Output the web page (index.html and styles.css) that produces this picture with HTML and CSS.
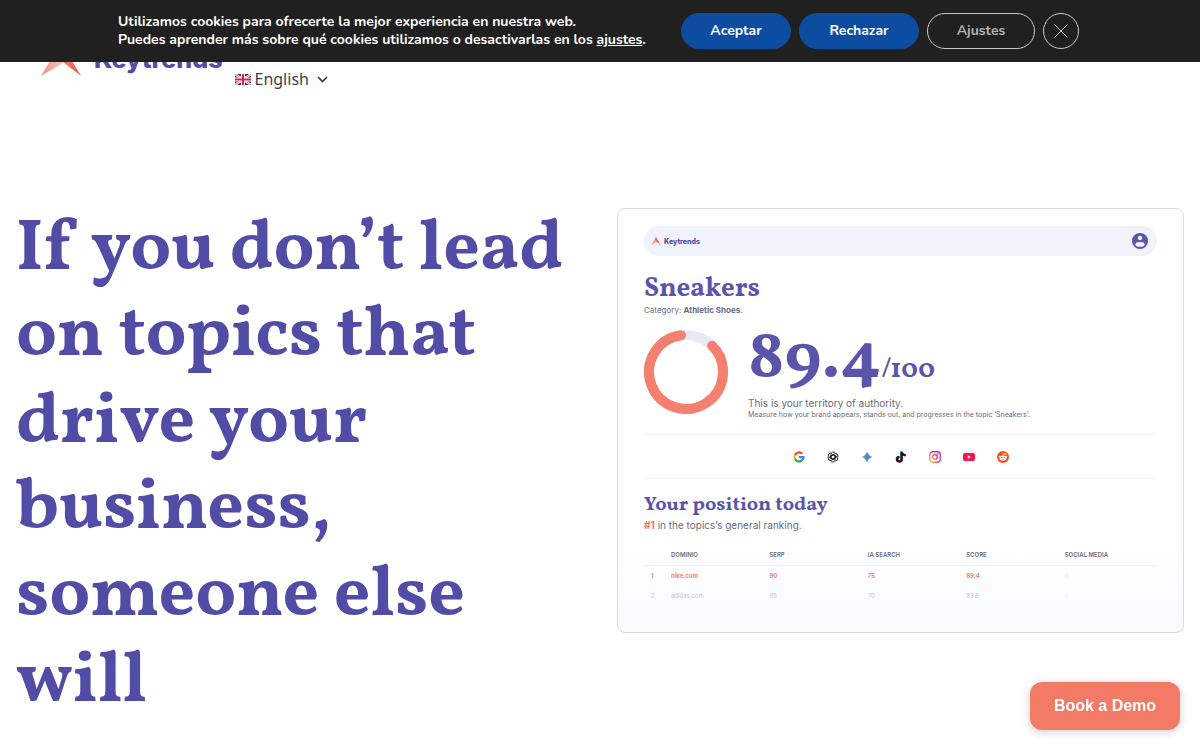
FILE: index.html
```html
<!DOCTYPE html>
<html lang="en">
<head>
  <meta charset="UTF-8" />
  <meta name="viewport" content="width=device-width, initial-scale=1" />
  <title>Keytrends</title>
  <link rel="stylesheet" href="styles.css">
</head>
<body>
  <!-- Cookie bar -->
  <aside class="cookie-bar" lang="es" aria-label="Cookies">
    <p class="cookie-text">
      Utilizamos cookies para ofrecerte la mejor experiencia en nuestra web.<br>
      Puedes aprender más sobre qué cookies utilizamos o desactivarlas en los <a href="#">ajustes</a>.
    </p>
    <div class="cookie-actions">
      <button class="btn-accept">Aceptar</button>
      <button class="btn-reject">Rechazar</button>
      <button class="btn-settings">Ajustes</button>
      <button class="btn-close" aria-label="Cerrar">
        <svg width="14" height="14" viewBox="0 0 14 14"><path d="M.5.5l13 13M13.500.5L.5 13.500" stroke="#c8c8c8" fill="none"/></svg>
      </button>
    </div>
  </aside>

  <!-- Header -->
  <header class="site-header">
    <a class="logo" href="#">
      <svg width="40" height="34" viewBox="0 0 40 34">
        <defs>
          <linearGradient id="legLeft" x1="0" y1="1" x2="1" y2="0.4">
            <stop offset="0" stop-color="#f08f82"/>
            <stop offset="1" stop-color="#f6cdc6"/>
          </linearGradient>
          <linearGradient id="legRight" x1="0" y1="0" x2="1" y2="1">
            <stop offset="0" stop-color="#f2937f"/>
            <stop offset="1" stop-color="#e4604e"/>
          </linearGradient>
        </defs>
        <path d="M20 0L0 34L22 21L24 7z" fill="url(#legLeft)"/>
        <path d="M20 0L40 34L22 20L15 9z" fill="url(#legRight)"/>
      </svg>
      <span>Keytrends</span>
    </a>
    <nav>
      <a class="lang" href="#">
        <svg width="16" height="11" viewBox="0 0 16 11">
          <path fill="#2b2c6b" d="M0 0h16v11H0z"/>
          <path stroke="#fff" stroke-width="2.400" d="M0 0l16 11M16 0L0 11"/>
          <path stroke="#d0324b" stroke-width=".7" d="M0 0l16 11M16 0L0 11"/>
          <path stroke="#fff" stroke-width="4" d="M8 0v11M0 5.500h16"/>
          <path stroke="#d8203f" stroke-width="2" d="M8 0v11M0 5.500h16"/>
        </svg>
        <span>English</span>
        <svg class="caret" width="11" height="7" viewBox="0 0 11 7"><path d="M1 1l4.500 4.500L10 1" fill="none" stroke="#334" stroke-width="1.600"/></svg>
      </a>
    </nav>
  </header>

  <!-- Hero -->
  <main class="hero">
    <h1>If you don’t lead<br>on topics that<br>drive your<br>business,<br>someone else<br>will</h1>

    <section class="card">
      <div class="card-bar">
        <div class="card-logo">
          <svg width="10" height="8" viewBox="0 0 40 34">
            <path d="M20 0L0 34L22 21L24 7z" fill="#f0a08c"/>
            <path d="M20 0L40 34L22 20L15 9z" fill="#e4705c"/>
          </svg>
          <span>Keytrends</span>
        </div>
        <svg width="16" height="16" viewBox="0 0 16 16">
          <circle cx="8" cy="8" r="8" fill="#5c55a8"/>
          <circle cx="8" cy="5" r="2.200" fill="#f1f3fc"/>
          <ellipse cx="8" cy="11.400" rx="4.600" ry="2.400" fill="#f1f3fc"/>
        </svg>
      </div>

      <h2>Sneakers</h2>
      <p class="category">Category: <strong>Athletic Shoes.</strong></p>

      <div class="score">
        <svg width="84" height="84" viewBox="0 0 84 84">
          <circle cx="42" cy="42" r="37" fill="none" stroke="#e9e8f4" stroke-width="10"/>
          <path d="M68.200 15.800A37 37 0 1 1 37 5.300" fill="none" stroke="#f58070" stroke-width="10" stroke-linecap="round"/>
        </svg>
        <div>
          <div class="score-value">89.4<small>/100</small></div>
          <p class="score-title">This is your territory of authority.</p>
          <p class="score-note">Measure how your brand appears, stands out, and progresses in the topic ‘Sneakers’.</p>
        </div>
      </div>

      <div class="sources">
        <!-- Google -->
        <svg viewBox="0 0 24 24">
          <path fill="none" stroke="#ea4335" stroke-width="4.500" d="M4 8A9 9 0 0 1 18.500 5.500"/>
          <path fill="none" stroke="#fbbc05" stroke-width="4.500" d="M4 16A9 9 0 0 1 4 8"/>
          <path fill="none" stroke="#34a853" stroke-width="4.500" d="M4 16A9 9 0 0 0 17.500 19"/>
          <path fill="none" stroke="#4285f4" stroke-width="4.500" d="M12 12h9A9 9 0 0 1 17.500 19"/>
        </svg>
        <!-- ChatGPT -->
        <svg viewBox="0 0 24 24">
          <defs><path id="petal" d="M8 14V6.500a4.800 4.800 0 0 1 8.800-2.500M8 9.500l4-2.300 4.200 2.400"/></defs>
          <g fill="none" stroke="#222" stroke-width="1.900">
            <use href="#petal"/>
            <use href="#petal" transform="rotate(60 12 12)"/>
            <use href="#petal" transform="rotate(120 12 12)"/>
            <use href="#petal" transform="rotate(180 12 12)"/>
            <use href="#petal" transform="rotate(240 12 12)"/>
            <use href="#petal" transform="rotate(300 12 12)"/>
          </g>
        </svg>
        <!-- Gemini -->
        <svg viewBox="0 0 24 24">
          <defs>
            <linearGradient id="gem" x1="0" y1="0" x2="1" y2="0">
              <stop offset="0" stop-color="#e9b64a"/><stop offset=".3" stop-color="#4fa08a"/><stop offset=".6" stop-color="#4484e8"/><stop offset="1" stop-color="#4b7de0"/>
            </linearGradient>
          </defs>
          <path fill="url(#gem)" d="M12 1c2 6 5 9 11 11-6 2-9 5-11 11-2-6-5-9-11-11 6-2 9-5 11-11z"/>
        </svg>
        <!-- TikTok -->
        <svg viewBox="0 0 24 24">
          <path fill="none" stroke="#25d5d0" stroke-width="4" d="M12 1v15a4.500 4.500 0 1 1-4.500-4.500M12 2c1 4 4 6 8 6"/>
          <path fill="none" stroke="#ee2a55" stroke-width="4" d="M14 2v15a4.500 4.500 0 1 1-4.500-4.500M14 3c1 4 4 6 8 6"/>
          <path fill="none" stroke="#111" stroke-width="4" d="M13 1v15.500a4.500 4.500 0 1 1-4.500-4.500M13 2c1 4 4 6 8 6"/>
        </svg>
        <!-- Instagram -->
        <svg viewBox="0 0 24 24">
          <defs>
            <linearGradient id="insta" x1="0" y1="1" x2="1" y2="0">
              <stop offset="0" stop-color="#fdc245"/><stop offset=".5" stop-color="#e8335f"/><stop offset="1" stop-color="#9a36d8"/>
            </linearGradient>
          </defs>
          <rect x="1.500" y="1.500" width="21" height="21" rx="6" fill="none" stroke="url(#insta)" stroke-width="2.600"/>
          <circle cx="12" cy="12" r="4.800" fill="none" stroke="url(#insta)" stroke-width="2.600"/>
          <circle cx="17.800" cy="6.200" r="1.500" fill="#b434b8"/>
        </svg>
        <!-- YouTube -->
        <svg viewBox="0 0 24 24">
          <rect x="0" y="4" width="24" height="16" rx="4" fill="#fb1450"/>
          <path fill="#fff" d="M9.500 8.500v7l6-3.500z"/>
        </svg>
        <!-- Reddit -->
        <svg viewBox="0 0 24 24">
          <circle cx="12" cy="12" r="12" fill="#f4511e"/>
          <path d="M12 9l1-4 4 1" fill="none" stroke="#fff" stroke-width="1.400"/>
          <g fill="#fff">
            <circle cx="17" cy="6" r="1.600"/><circle cx="5.500" cy="11.500" r="2"/><circle cx="18.500" cy="11.500" r="2"/>
            <ellipse cx="12" cy="14" rx="7" ry="5.200"/>
          </g>
          <g fill="#f4511e"><circle cx="9.500" cy="13" r="1.400"/><circle cx="14.500" cy="13" r="1.400"/></g>
          <path d="M9 16q3 2 6 0" fill="none" stroke="#f4511e"/>
        </svg>
      </div>

      <h3>Your position today</h3>
      <p class="position"><strong>#1</strong> in the topics’s general ranking.</p>

      <table>
        <thead>
          <tr><th class="rank"></th><th>DOMINIO</th><th>SERP</th><th>IA SEARCH</th><th>SCORE</th><th class="social">SOCIAL MEDIA</th></tr>
        </thead>
        <tbody>
          <tr class="first"><td class="rank">1</td><td>nike.com</td><td>90</td><td>75</td><td>89.4</td><td class="empty">0</td></tr>
          <tr class="second"><td class="rank">2</td><td>adidas.com</td><td>85</td><td>70</td><td>83.8</td><td class="empty">0</td></tr>
        </tbody>
      </table>
    </section>
  </main>

  <button class="demo">Book a Demo</button>
</body>
</html>
```

FILE: styles.css
```css
* {
  box-sizing: border-box;
}

body {
  margin: 0;
  background: #fff;
  color: #6b6b80;
  font-family: Inter, "Liberation Sans", sans-serif;
}

h1, h2, h3, p {
  margin: 0;
}

h1, h2, h3, .score-value {
  font-family: Vollkorn, "Liberation Serif", serif;
  font-weight: 700;
  color: #514da6;
}

/* Cookie bar */
.cookie-bar {
  position: fixed;
  top: 0;
  left: 0;
  right: 0;
  z-index: 10;
  display: flex;
  justify-content: center;
  align-items: center;
  gap: 38px;
  min-height: 62px;
  padding-right: 3px;
  background: #202020;
  color: #fff;
  font-family: Nunito, "Open Sans", sans-serif;
  font-size: 14px;
  font-weight: 700;
}

.cookie-text {
  width: 525px;
  line-height: 18px;
  white-space: nowrap;
}

.cookie-text a {
  color: #fff;
}

.cookie-actions {
  display: flex;
  gap: 8px;
}

.cookie-actions button {
  height: 36px;
  padding: 0 0 2px;
  border: 1px solid #0c4da2;
  border-radius: 18px;
  background: #0c4da2;
  color: #fff;
  font: inherit;
  cursor: pointer;
}

.cookie-actions .btn-accept {
  width: 110px;
}

.cookie-actions .btn-reject {
  width: 120px;
}

.cookie-actions .btn-settings {
  width: 108px;
  border-color: #c8c8c8;
  background: transparent;
  color: #b4b4b4;
}

.cookie-actions .btn-close {
  display: flex;
  align-items: center;
  justify-content: center;
  width: 36px;
  padding: 0;
  border-color: #c8c8c8;
  background: transparent;
}

/* Header */
.site-header {
  display: flex;
  align-items: flex-end;
  gap: 12px;
  padding: 42px 41px 0;
}

.logo {
  display: flex;
  align-items: center;
  gap: 13px;
  height: 34px;
  margin-bottom: 15px;
  color: #514da6;
  font-size: 25px;
  font-weight: 800;
  line-height: 36px;
  text-decoration: none;
}

.lang {
  display: flex;
  align-items: center;
  gap: 4px;
  color: #3c3f52;
  font-family: "Noto Sans", sans-serif;
  font-size: 16px;
  line-height: 24px;
  text-decoration: none;
}

.caret {
  margin-left: 4px;
}

/* Hero */
.hero {
  display: grid;
  grid-template-columns: 1fr 1fr;
  align-items: start;
  gap: 34px;
  padding: 0 16px;
  margin-top: 117px;
}

h1 {
  font-size: 72px;
  line-height: 1.2;
}

.card {
  min-height: 425px;
  padding: 17px 26px 0;
  border: 1px solid #d9dadf;
  border-radius: 8px;
  background: linear-gradient(#fff 80%, #f7faff);
}

.card h2, .card h3, .score-value {
  color: #5a55aa;
}

.card-bar {
  display: flex;
  align-items: center;
  justify-content: space-between;
  height: 30px;
  padding: 0 9px 0 7px;
  border-radius: 15px;
  background: #f1f3fc;
}

.card-logo {
  display: flex;
  align-items: center;
  gap: 3px;
  color: #514da6;
  font-size: 7px;
  font-weight: 800;
}

h2 {
  margin-top: 18px;
  font-size: 27px;
  line-height: 30px;
}

.category {
  font-size: 8px;
  line-height: 12px;
}

.score {
  display: flex;
  gap: 20px;
  margin-top: 14px;
}

.score-value {
  height: 66px;
  font-size: 67px;
  line-height: 60px;
}

.score-value small {
  font-size: 27px;
}

.score-title {
  font-size: 10px;
  line-height: 14px;
}

.score-note {
  font-size: 7px;
  line-height: 10px;
}

.sources {
  display: flex;
  justify-content: center;
  align-items: center;
  gap: 22px;
  height: 45px;
  margin-top: 14px;
  border: solid #f4f4f7;
  border-width: 1px 0;
}

.sources svg {
  width: 12px;
  height: 12px;
}

h3 {
  margin-top: 14px;
  font-size: 20px;
  line-height: 25px;
}

.position {
  font-size: 10px;
  line-height: 14px;
}

.position strong {
  color: #ef6f60;
}

table {
  width: 100%;
  margin-top: 13px;
  border-collapse: collapse;
  table-layout: fixed;
  font-size: 6px;
  line-height: 20px;
}

th, td {
  padding: 0;
  text-align: left;
}

th {
  font-weight: 600;
}

thead tr {
  border-bottom: 1px solid #eff1f5;
}

.rank {
  width: 27px;
  padding-left: 7px;
}

.social {
  width: 18%;
}

.first {
  color: #ef8279;
  font-weight: 700;
}

.second {
  color: #c3c5cd;
}

.first .empty, .second .empty {
  color: #eceef3;
  font-weight: 400;
}

/* Floating button */
.demo {
  position: fixed;
  right: 20px;
  bottom: 20px;
  width: 150px;
  height: 48px;
  border: 0;
  border-radius: 12px;
  background: #f47a68;
  box-shadow: 0 2px 8px rgba(0, 0, 0, 0.2);
  color: #fff;
  font: bold 16px "Liberation Sans", sans-serif;
  cursor: pointer;
}
```
